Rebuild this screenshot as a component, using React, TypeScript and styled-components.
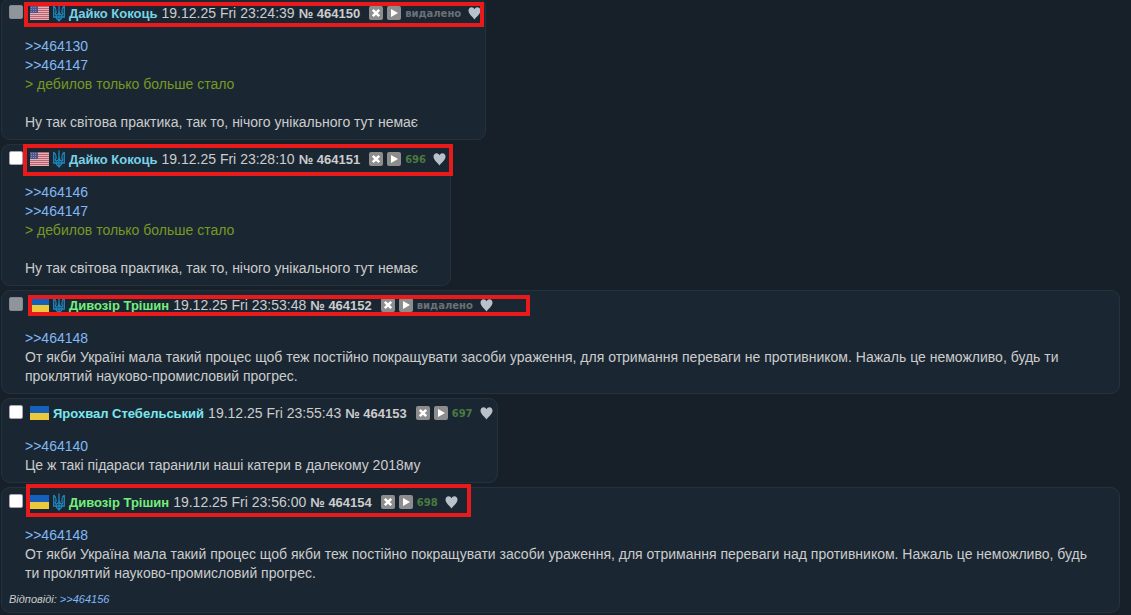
import React from 'react';
import styled, { createGlobalStyle, css } from 'styled-components';

const GlobalStyle = createGlobalStyle`
  body {
    margin: 0;
    background: #172028;
    color: #cccccc;
    font: 14px/19px "Liberation Sans", Arial, sans-serif;
    overflow: hidden;
  }
`;

const Thread = styled.main`
  display: flex;
  flex-direction: column;
  align-items: flex-start;
  gap: 4px;
  margin: -2px 11px 0 1px;
`;

const Post = styled.article`
  position: relative;
  box-sizing: border-box;
  padding: 5px 4px 7px 7px;
  background: #1a2733;
  border: 1px solid #24323f;
  border-radius: 9px;
`;

const Header = styled.header`
  display: flex;
  align-items: center;
  gap: 4px;
  height: 19px;
  white-space: nowrap;

  svg {
    display: block;
    margin-bottom: 1px;
  }
`;

const Check = styled.input`
  appearance: none;
  box-sizing: border-box;
  width: 14px;
  height: 14px;
  margin: 0 3px 3px 0;
  border: 1px solid #a9a4b2;
  border-radius: 2px;
  background: #ffffff;

  &:disabled {
    background: #90959c;
    border-color: #85898f;
  }
`;

const Name = styled.span<{ $color: string }>`
  color: ${(p) => p.$color};
  font-size: 13px;
  font-weight: bold;
`;

const Num = styled.b`
  font-size: 13px;
`;

const Actions = styled.div`
  display: flex;
  align-items: center;
  gap: 4px;
  margin-left: 5px;
`;

const IconButton = styled.button`
  display: flex;
  padding: 0;
  border: 0;
  background: none;
`;

const Status = styled.span<{ $deleted: boolean }>`
  margin-right: 3px;
  color: ${(p) => (p.$deleted ? '#6c7076' : '#4b7a40')};
  font: bold 10px/19px "DejaVu Sans", Verdana, sans-serif;
`;

const Body = styled.div`
  margin: 14px 20px 0 16px;
`;

const Line = styled.p<{ $quote?: boolean }>`
  margin: 0;
  min-height: 19px;
  ${(p) => p.$quote && css`color: #789922;`}
`;

const Ref = styled.a`
  color: #81b8f5;
  text-decoration: none;
`;

const Replies = styled.footer`
  margin-top: 11px;
  font-size: 11px;
  line-height: 11px;
  font-style: italic;
`;

const Mark = styled.div<{ $x: number; $y: number; $w: number; $h: number }>`
  position: absolute;
  left: ${(p) => p.$x}px;
  top: ${(p) => p.$y}px;
  box-sizing: border-box;
  width: ${(p) => p.$w}px;
  height: ${(p) => p.$h}px;
  border: 4px solid #e81a1c;
  pointer-events: none;
`;

const FlagUS = () => (
  <svg width="19" height="14" viewBox="0 0 19 14" role="img" aria-label="US">
    <rect width="19" height="14" fill="#dcb4bb" />
    {[0, 2, 4, 6, 8, 10, 12].map((y) => (
      <rect key={y} y={y} width="19" height="1" fill="#c4606c" />
    ))}
    <rect width="8" height="7" fill="#50568a" />
    <path d="M1 1.5h6M1 3.5h6M1 5.5h6" stroke="#8488b2" strokeDasharray="1 1" />
  </svg>
);

const FlagUA = () => (
  <svg width="19" height="14" viewBox="0 0 19 14" role="img" aria-label="UA">
    <rect width="19" height="7" fill="#1560bd" />
    <rect y="7" width="19" height="7" fill="#ecc93c" />
  </svg>
);

const Trident = () => (
  <svg width="12" height="18" viewBox="0 0 12 18" fill="none" stroke="#1c86bd" strokeWidth="1.3" aria-hidden="true">
    <path d="M.7 2v11h10.6V2M.7 2c2 1.500 2.500 4 2.300 6.500C2 9 2 10.500 3.200 11c1.600 0 2.800-2 2.800-4.500V.5M11.300 2c-2 1.500-2.500 4-2.300 6.500 1 .5 1 2-.2 2.500C7.200 11 6 9 6 6.500M3.200 11v2.500c.3 1.500 1.500 1.500 2.800 3.500 1.300-2 2.500-2 2.800-3.500V11M6 10v6.500" />
  </svg>
);

const Cross = () => (
  <svg width="14" height="14" viewBox="0 0 14 14" aria-hidden="true">
    <rect width="14" height="14" rx="2" fill="#8d8d8d" />
    <path d="M3.800 3.800l6.400 6.400M10.200 3.800l-6.400 6.400" stroke="#fff" strokeWidth="2.600" />
  </svg>
);

const Play = () => (
  <svg width="14" height="14" viewBox="0 0 14 14" aria-hidden="true">
    <rect width="14" height="14" rx="2" fill="#8d8d8d" />
    <path d="M4 3l7 4-7 4z" fill="#fff" />
  </svg>
);

const Heart = () => (
  <svg width="13" height="13" viewBox="0 0 13 13" aria-hidden="true">
    <path d="M6.500 12.600C5.500 10.300.5 7.500.5 3.800.5 1.600 1.900.3 3.500.3c1.400 0 2.500.8 3 2 .5-1.200 1.600-2 3-2 1.600 0 3 1.300 3 3.500 0 3.700-5 6.500-6 8.800z" fill="#b9c1ca" />
  </svg>
);

type PostData = {
  id: string;
  flag: 'us' | 'ua';
  trident: boolean;
  name: string;
  color: string;
  time: string;
  status: string;
  refs: string[];
  quote?: string;
  text: string;
  reply?: string;
  mark?: [number, number, number, number];
};

const posts: PostData[] = [
  {
    id: '464150', flag: 'us', trident: true, name: 'Дайко Кокоць', color: '#79d2e6', time: '23:24:39',
    status: 'видалено', refs: ['464130', '464147'], quote: '> дебилов только больше стало',
    text: 'Ну так світова практика, так то, нічого унікального тут немає', mark: [22, 3, 460, 25],
  },
  {
    id: '464151', flag: 'us', trident: true, name: 'Дайко Кокоць', color: '#79d2e6', time: '23:28:10',
    status: '696', refs: ['464146', '464147'], quote: '> дебилов только больше стало',
    text: 'Ну так світова практика, так то, нічого унікального тут немає', mark: [21, -1, 430, 32],
  },
  {
    id: '464152', flag: 'ua', trident: true, name: 'Дивозір Трішин', color: '#74ee7c', time: '23:53:48',
    status: 'видалено', refs: ['464148'],
    text: 'От якби Україні мала такий процес щоб теж постійно покращувати засоби ураження, для отримання переваги не противником. Нажаль це неможливо, будь ти проклятий науково-промисловий прогрес.',
    mark: [26, 4, 502, 21],
  },
  {
    id: '464153', flag: 'ua', trident: false, name: 'Ярохвал Стебельський', color: '#7ae8ee', time: '23:55:43',
    status: '697', refs: ['464140'], text: 'Це ж такі підараси таранили наші катери в далекому 2018му',
  },
  {
    id: '464154', flag: 'ua', trident: true, name: 'Дивозір Трішин', color: '#74ee7c', time: '23:56:00',
    status: '698', refs: ['464148'],
    text: 'От якби Україна мала такий процес щоб якби теж постійно покращувати засоби ураження, для отримання переваги над противником. Нажаль це неможливо, будь ти проклятий науково-промисловий прогрес.',
    reply: '464156', mark: [24, -4, 445, 33],
  },
];

const PostCard = ({ post }: { post: PostData }) => {
  const deleted = post.status === 'видалено';
  return (
    <Post id={post.id}>
      <Header>
        <Check type="checkbox" disabled={deleted} aria-label={`№ ${post.id}`} />
        {post.flag === 'us' ? <FlagUS /> : <FlagUA />}
        {post.trident && <Trident />}
        <Name $color={post.color}>{post.name}</Name>
        <time>19.12.25 Fri {post.time}</time>
        <Num>№ {post.id}</Num>
        <Actions>
          <IconButton type="button" aria-label="Сховати"><Cross /></IconButton>
          <IconButton type="button" aria-label="Відповісти"><Play /></IconButton>
          <Status $deleted={deleted}>{post.status}</Status>
          <IconButton type="button" aria-label="Подобається"><Heart /></IconButton>
        </Actions>
      </Header>
      <Body>
        {post.refs.map((r) => (
          <Line key={r}><Ref href={`#${r}`}>&gt;&gt;{r}</Ref></Line>
        ))}
        {post.quote && <Line $quote>{post.quote}</Line>}
        {post.quote && <Line />}
        <Line>{post.text}</Line>
      </Body>
      {post.reply && (
        <Replies>Відповіді: <Ref href={`#${post.reply}`}>&gt;&gt;{post.reply}</Ref></Replies>
      )}
      {post.mark && <Mark $x={post.mark[0]} $y={post.mark[1]} $w={post.mark[2]} $h={post.mark[3]} />}
    </Post>
  );
};

export default function App() {
  return (
    <>
      <GlobalStyle />
      <Thread>
        {posts.map((p) => <PostCard key={p.id} post={p} />)}
      </Thread>
    </>
  );
}
